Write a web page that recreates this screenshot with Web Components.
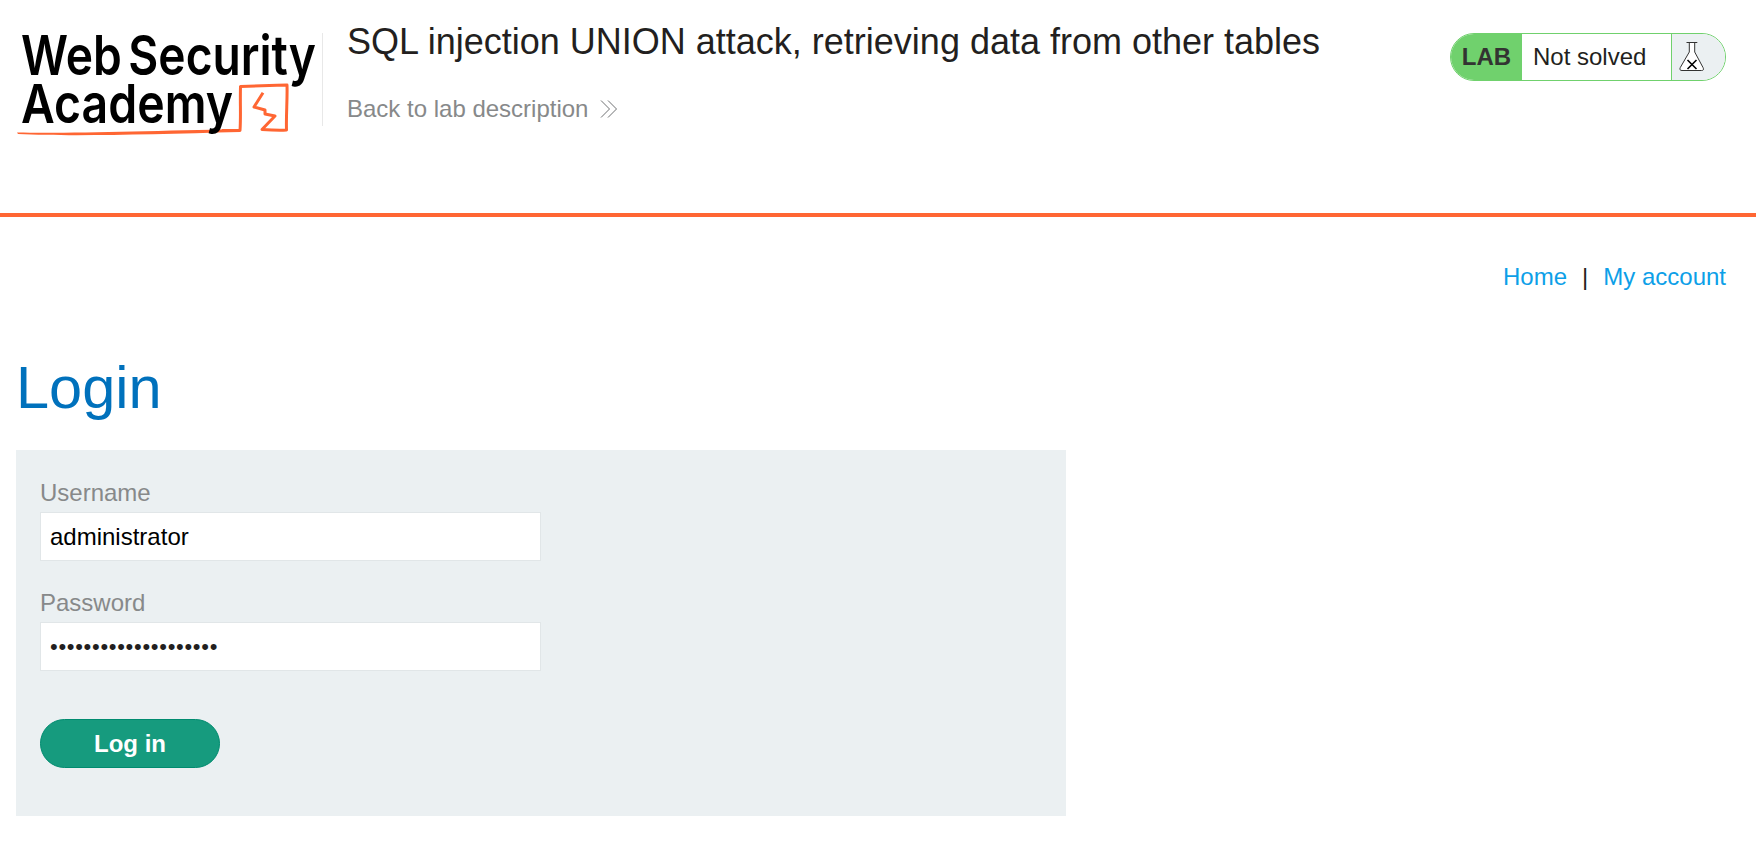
<!DOCTYPE html>
<html lang="en">
<head>
<meta charset="utf-8">
<title>Login</title>
<style>
    html, body { margin: 0; padding: 0; background: #fff; }
    body { font-family: "Liberation Sans", Arial, sans-serif; font-size: 24px; color: #231f20; }
</style>
</head>
<body>
<lab-page>
    <lab-header slot="header" title-text="SQL injection UNION attack, retrieving data from other tables"></lab-header>
    <top-nav></top-nav>
    <login-panel></login-panel>
</lab-page>

<script>
function shadowFrom(el, html) {
    const template = document.createElement('template');
    template.innerHTML = html;
    el.attachShadow({mode: 'open'}).appendChild(template.content.cloneNode(true));
}

customElements.define('lab-page', class extends HTMLElement {
    constructor() {
        super();
        shadowFrom(this, `
            <style>
                :host { display: block; }
            </style>
            <slot name="header"></slot>
            <slot></slot>
        `);
    }
});

customElements.define('academy-logo', class extends HTMLElement {
    constructor() {
        super();
        shadowFrom(this, `
            <style>
                :host { display: block; width: 323px; height: 125px; flex: none; }
                svg { display: block; overflow: visible; }
                text { font-family: Inter, "Liberation Sans", sans-serif; font-weight: 600; fill: #000; }
            </style>
            <svg width="323" height="125" viewBox="0 0 323 125">
                <path d="M17 120.500 C70 121.500 150 119 240 117 L240 120 C150 122.500 70 124.500 18 122 Z" fill="#ff6633"/>
                <path d="M222 118.500 L240 118.500 C241 105 240 90 240.500 74.500 C258 74 272 73.500 287 73 C287.500 88 286 102 286.500 118 C278 118.500 270 118 262 117.500 L275 104 L265 102 L265 98 L254 95 L263 80.700" fill="none" stroke="#ff6633" stroke-width="3" stroke-linejoin="round"/>
                <text x="21" y="63" font-size="55" word-spacing="-6" textLength="295" lengthAdjust="spacingAndGlyphs">Web Security</text>
                <text x="21" y="111" font-size="54" textLength="212" lengthAdjust="spacingAndGlyphs">Academy</text>
                <line x1="322.500" y1="21" x2="322.500" y2="114" stroke="#e8e8e8"/>
            </svg>
        `);
    }
});

customElements.define('lab-status', class extends HTMLElement {
    constructor() {
        super();
        shadowFrom(this, `
            <style>
                :host {
                    display: flex;
                    flex: none;
                    box-sizing: border-box;
                    width: 276px;
                    height: 48px;
                    border: 1px solid #70d16d;
                    border-radius: 24px;
                    overflow: hidden;
                    line-height: 46px;
                }
                .tag {
                    width: 71px;
                    flex: none;
                    background: #70d16d;
                    color: #333332;
                    font-weight: bold;
                    text-align: center;
                    box-sizing: border-box;
                }
                .state { flex: 1; padding-left: 11px; color: #231f20; }
                .icon {
                    width: 53px;
                    flex: none;
                    background: #ebf0f2;
                    border-left: 1px solid #70d16d;
                }
                svg { display: block; }
            </style>
            <span class="tag">LAB</span>
            <span class="state">Not solved</span>
            <span class="icon">
                <svg width="53" height="46" viewBox="0 0 53 46">
                    <path d="M14.500 8.500 H25.300 M17.300 8.500 V18 L8.300 33.500 Q7 36.500 10 36.500 H29.500 Q32.500 36.500 31 33.500 L22.700 18 V8.500" fill="#fff" stroke="#333332" stroke-width="1" stroke-linejoin="round"/>
                    <path d="M15.500 26 L24.500 35 M24.500 26 L15.500 35" fill="none" stroke="#000" stroke-width="1.600"/>
                </svg>
            </span>
        `);
    }
});

customElements.define('lab-header', class extends HTMLElement {
    constructor() {
        super();
        shadowFrom(this, `
            <style>
                :host {
                    display: flex;
                    box-sizing: border-box;
                    height: 217px;
                    padding: 12px 30px 0 0;
                    border-bottom: 4px solid #ff6633;
                }
                .title { flex: 1; padding-left: 24px; }
                h2 { margin: 9px 0 0; font-size: 36px; line-height: 42px; font-weight: normal; color: #231f20; }
                a { display: inline-flex; align-items: center; gap: 12px; margin-top: 32px; color: #87898a; line-height: 28px; text-decoration: none; }
                lab-status { margin-top: 21px; }
            </style>
            <academy-logo></academy-logo>
            <div class="title">
                <h2></h2>
                <a href="#">Back to lab description
                    <svg width="18" height="18" viewBox="0 0 18 18">
                        <path d="M1 .500 L9.500 9 L1 17.500 M8 .500 L16.500 9 L8 17.500" fill="none" stroke="#6f7172" stroke-width="1"/>
                    </svg>
                </a>
            </div>
            <lab-status></lab-status>
        `);
        this.shadowRoot.querySelector('h2').textContent = this.getAttribute('title-text');
    }
});

customElements.define('top-nav', class extends HTMLElement {
    constructor() {
        super();
        shadowFrom(this, `
            <style>
                :host {
                    display: flex;
                    justify-content: flex-end;
                    gap: 15px;
                    padding: 46px 30px 0 0;
                    line-height: 28px;
                }
                a { color: #0d9fe8; text-decoration: none; }
                span { color: #231f20; }
            </style>
            <a href="#">Home</a><span>|</span><a href="#">My account</a>
        `);
    }
});

customElements.define('form-field', class extends HTMLElement {
    constructor() {
        super();
        shadowFrom(this, `
            <style>
                :host { display: block; margin-bottom: 28px; }
                label { display: block; color: #87898a; line-height: 27px; margin-bottom: 6px; }
                .input {
                    box-sizing: border-box;
                    width: 501px;
                    height: 49px;
                    padding: 0 9px;
                    background: #fff;
                    border: 1px solid #e1e6e8;
                    line-height: 47px;
                    color: #000;
                    white-space: nowrap;
                }
                :host([type="password"]) .input { font-size: 22px; letter-spacing: .700px; color: #231f20; }
            </style>
            <label></label>
            <div class="input"><slot></slot></div>
        `);
        this.shadowRoot.querySelector('label').textContent = this.getAttribute('label');
    }
});

customElements.define('pill-button', class extends HTMLElement {
    constructor() {
        super();
        shadowFrom(this, `
            <style>
                :host {
                    display: block;
                    box-sizing: border-box;
                    width: 180px;
                    height: 49px;
                    border: 1px solid #008b6f;
                    border-radius: 25px;
                    background: #169b7e;
                    color: #fff;
                    font-weight: bold;
                    line-height: 47px;
                    text-align: center;
                }
            </style>
            <slot></slot>
        `);
    }
});

customElements.define('login-panel', class extends HTMLElement {
    constructor() {
        super();
        shadowFrom(this, `
            <style>
                :host { display: block; padding: 0 16px; }
                h1 { margin: 58px 0 0; font-size: 59.500px; line-height: 78px; font-weight: normal; color: #0071bc; }
                form { display: block; box-sizing: border-box; width: 1050px; height: 366px; margin-top: 23px; padding: 29px 24px 0; background: #ebf0f2; }
                pill-button { margin-top: 48px; }
            </style>
            <h1>Login</h1>
            <form>
                <form-field label="Username">administrator</form-field>
                <form-field label="Password" type="password">••••••••••••••••••••</form-field>
                <pill-button>Log in</pill-button>
            </form>
        `);
    }
});
</script>
</body>
</html>
